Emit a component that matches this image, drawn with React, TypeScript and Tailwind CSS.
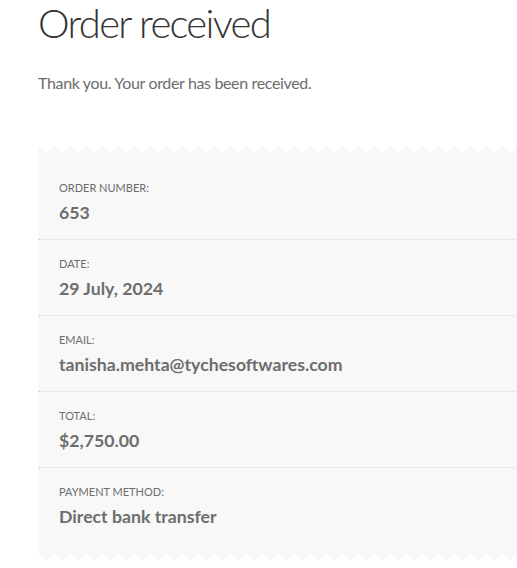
import React from 'react';

const rows = [
  { label: 'Order number:', value: '653' },
  { label: 'Date:', value: '29 July, 2024' },
  { label: 'Email:', value: 'tanisha.mehta@tychesoftwares.com' },
  { label: 'Total:', value: '$2,750.00' },
  { label: 'Payment method:', value: 'Direct bank transfer' },
];

// zigzag edge of the receipt card
const Zigzag: React.FC<{ flip?: boolean }> = ({ flip }) => (
  <svg className="block w-full h-[8px]" preserveAspectRatio="none">
    <defs>
      <pattern id={flip ? 'zz-b' : 'zz-t'} width="16" height="8" patternUnits="userSpaceOnUse">
        {flip ? <path d="M0 0 L16 0 L8 7 Z" fill="#f8f8f8" /> : <path d="M0 1 L8 8 L0 8 Z M8 8 L16 1 L16 8 Z" fill="#f8f8f8" />}
      </pattern>
    </defs>
    <rect width="100%" height="8" fill={`url(#${flip ? 'zz-b' : 'zz-t'})`} />
  </svg>
);

const App: React.FC = () => {
  return (
    <div className="min-h-screen bg-white overflow-hidden font-['Lato',sans-serif]">
      <div className="pl-[38px]">
        <h1 className="text-[40px] font-light leading-[46px] text-[#333333] tracking-[-1.7px]">Order received</h1>
        <p className="mt-[25px] text-[16px] leading-[24px] text-[#6d6d6d] tracking-[-0.35px]">Thank you. Your order has been received.</p>

        <div className="mt-[50px] w-[600px]">
          <Zigzag />
          <div className="bg-[#f8f8f8] pt-[11px] pb-[10px]">
            {rows.map((r, i) => (
              <div
                key={r.label}
                className={`pl-[21px] pt-[16px] pb-[13px] ${i < rows.length - 1 ? 'border-b border-dotted border-[#d6d6d6]' : ''}`}
              >
                <div className="text-[11px] leading-[16px] uppercase text-[#6d6d6d]">{r.label}</div>
                <div className="mt-[4px] text-[17.7px] leading-[26px] font-bold text-[#6d6d6d]">{r.value}</div>
              </div>
            ))}
          </div>
          <Zigzag flip />
        </div>
      </div>
    </div>
  );
};

export default App;
